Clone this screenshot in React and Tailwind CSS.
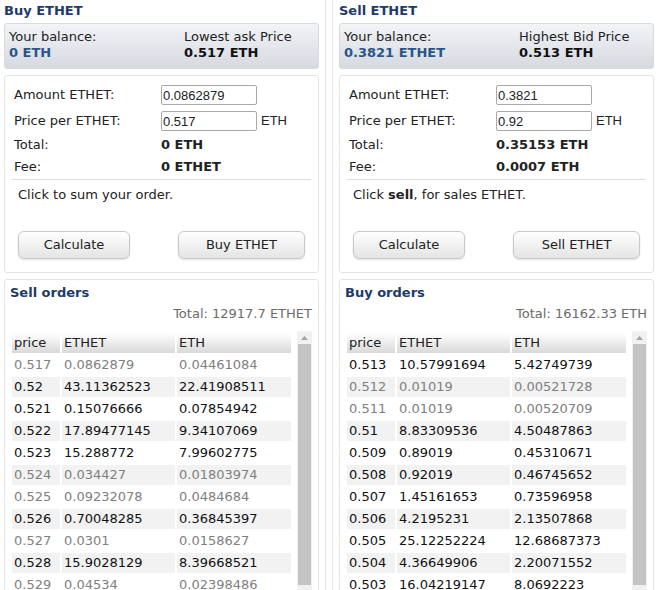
const sellOrders = [
  ["0.517", "0.0862879", "0.04461084", true],
  ["0.52", "43.11362523", "22.41908511", false],
  ["0.521", "0.15076666", "0.07854942", false],
  ["0.522", "17.89477145", "9.34107069", false],
  ["0.523", "15.288772", "7.99602775", false],
  ["0.524", "0.034427", "0.01803974", true],
  ["0.525", "0.09232078", "0.0484684", true],
  ["0.526", "0.70048285", "0.36845397", false],
  ["0.527", "0.0301", "0.0158627", true],
  ["0.528", "15.9028129", "8.39668521", false],
  ["0.529", "0.04534", "0.02398486", true],
]

const buyOrders = [
  ["0.513", "10.57991694", "5.42749739", false],
  ["0.512", "0.01019", "0.00521728", true],
  ["0.511", "0.01019", "0.00520709", true],
  ["0.51", "8.83309536", "4.50487863", false],
  ["0.509", "0.89019", "0.45310671", false],
  ["0.508", "0.92019", "0.46745652", false],
  ["0.507", "1.45161653", "0.73596958", false],
  ["0.506", "4.2195231", "2.13507868", false],
  ["0.505", "25.12252224", "12.68687373", false],
  ["0.504", "4.36649906", "2.20071552", false],
  ["0.503", "16.04219147", "8.0692223", false],
]

const Button = ({ children, className }) => (
  <button className={"h-[28px] rounded-[6px] border border-[#c8c8c8] bg-gradient-to-b from-white to-[#e4e4e4] text-[13px] text-[#222] shadow-[0_1px_2px_rgba(0,0,0,0.12)] " + className}>
    {children}
  </button>
)

const Field = ({ label, value, unit }) => (
  <div className="flex h-[20px] items-center">
    <div className="w-[149px] pl-[2px]">{label}</div>
    <input readOnly value={value} className="h-[20px] w-[96px] rounded-[2px] border border-[#a9a9a9] bg-white px-[1px] font-['Liberation_Sans',Arial,sans-serif] text-[13px] text-[#222] outline-none" />
    {unit && <span className="ml-[4px] font-['Liberation_Sans',Arial,sans-serif] text-[13px]">{unit}</span>}
  </div>
)

const OrderTable = ({ rows }) => (
  <div className="mt-[7px] flex h-[400px] overflow-hidden">
    <table className="w-[283px] border-separate border-spacing-[2px] self-start text-[13px]">
      <thead>
        <tr className="h-[20px]">
          <th className="w-[48px] bg-gradient-to-b from-white to-[#d9d9d9] px-[2px] text-left font-normal">price</th>
          <th className="w-[113px] bg-gradient-to-b from-white to-[#d9d9d9] px-[2px] text-left font-normal">ETHET</th>
          <th className="w-[114px] bg-gradient-to-b from-white to-[#d9d9d9] px-[2px] text-left font-normal">ETH</th>
        </tr>
      </thead>
      <tbody>
        {rows.map((r, i) => (
          <tr key={r[0]} className={"h-[20px] " + (r[3] ? "text-[#808080]" : "text-[#111]")}>
            {[r[0], r[1], r[2]].map((c, j) => (
              <td key={j} className={"px-[2px] leading-[20px] " + (i % 2 === 1 ? "bg-[#f2f2f2]" : "")}>{c}</td>
            ))}
          </tr>
        ))}
      </tbody>
    </table>
    <div className="ml-[4px] flex w-[15px] flex-col bg-[#f1f1f1]">
      <div className="flex h-[13px] shrink-0 items-center justify-center">
        <svg width="7" height="4" viewBox="0 0 7 4"><path d="M0 4 L3.5 0 L7 4 Z" fill="#a3a3a3" /></svg>
      </div>
      <div className="mx-[1px] h-[241px] shrink-0 bg-[#c4c4c4]" />
    </div>
  </div>
)

const Panel = ({ title, balance, priceLabel, price, amount, unitPrice, total, fee, hint, action, ordersTitle, ordersTotal, rows }) => (
  <div className="w-[315px] shrink-0">
    <div className="flex h-[21px] items-center font-bold text-[#1d3a6b]">{title}</div>
    <div className="mt-[2px] flex h-[46px] rounded-[3px] border border-[#d7dae0] bg-gradient-to-b from-[#f2f4f7] to-[#d6d9df] pl-[4px] pt-[5px] leading-[16px]">
      <div className="w-[175px]">
        <div>Your balance:</div>
        <div className="font-bold text-[#2a5589]">{balance}</div>
      </div>
      <div>
        <div>{priceLabel}</div>
        <div className="font-bold text-[#111]">{price}</div>
      </div>
    </div>
    <div className="mt-[6px] h-[198px] rounded-[3px] border border-[#e4e4e4] px-[7px] pt-[9px]">
      <Field label="Amount ETHET:" value={amount} />
      <div className="mt-[6px]"><Field label="Price per ETHET:" value={unitPrice} unit="ETH" /></div>
      <div className="mt-[3px] flex h-[22px] items-center">
        <div className="w-[149px] pl-[2px]">Total:</div>
        <div className="font-bold">{total}</div>
      </div>
      <div className="flex h-[22px] items-center">
        <div className="w-[149px] pl-[2px]">Fee:</div>
        <div className="font-bold">{fee}</div>
      </div>
      <div className="mt-[1px] h-px bg-[#dedede]" />
      <div className="flex h-[30px] items-center pl-[6px]">{hint}</div>
      <div className="mt-[21px] flex pl-[6px]">
        <Button className="w-[112px]">Calculate</Button>
        <Button className="ml-[48px] w-[127px]">{action}</Button>
      </div>
    </div>
    <div className="mt-[6px] rounded-[3px] border border-[#e4e4e4] pl-[5px] pr-[6px] pt-[3px]">
      <div className="flex h-[20px] items-center font-bold text-[#1d3a6b]">{ordersTitle}</div>
      <div className="flex h-[21px] items-center justify-end text-[#6b6b6b]">{ordersTotal}</div>
      <OrderTable rows={rows} />
    </div>
  </div>
)

export default function App() {
  return (
    <div className="flex h-[590px] w-[660px] items-start overflow-hidden bg-white font-['DejaVu_Sans',Verdana,sans-serif] text-[13px] text-[#222]">
      <div className="flex h-[590px] w-[326px] shrink-0 border-r border-[#e6e6e6] pl-[4px]">
        <Panel
          title="Buy ETHET"
          balance="0 ETH"
          priceLabel="Lowest ask Price"
          price="0.517 ETH"
          amount="0.0862879"
          unitPrice="0.517"
          total="0 ETH"
          fee="0 ETHET"
          hint="Click to sum your order."
          action="Buy ETHET"
          ordersTitle="Sell orders"
          ordersTotal="Total: 12917.7 ETHET"
          rows={sellOrders}
        />
      </div>
      <div className="ml-[6px] flex h-[590px] w-[328px] shrink-0 border-l border-[#e6e6e6] pl-[6px]">
        <Panel
          title="Sell ETHET"
          balance="0.3821 ETHET"
          priceLabel="Highest Bid Price"
          price="0.513 ETH"
          amount="0.3821"
          unitPrice="0.92"
          total="0.35153 ETH"
          fee="0.0007 ETH"
          hint={<span>Click <b>sell</b>, for sales ETHET.</span>}
          action="Sell ETHET"
          ordersTitle="Buy orders"
          ordersTotal="Total: 16162.33 ETH"
          rows={buyOrders}
        />
      </div>
    </div>
  )
}
